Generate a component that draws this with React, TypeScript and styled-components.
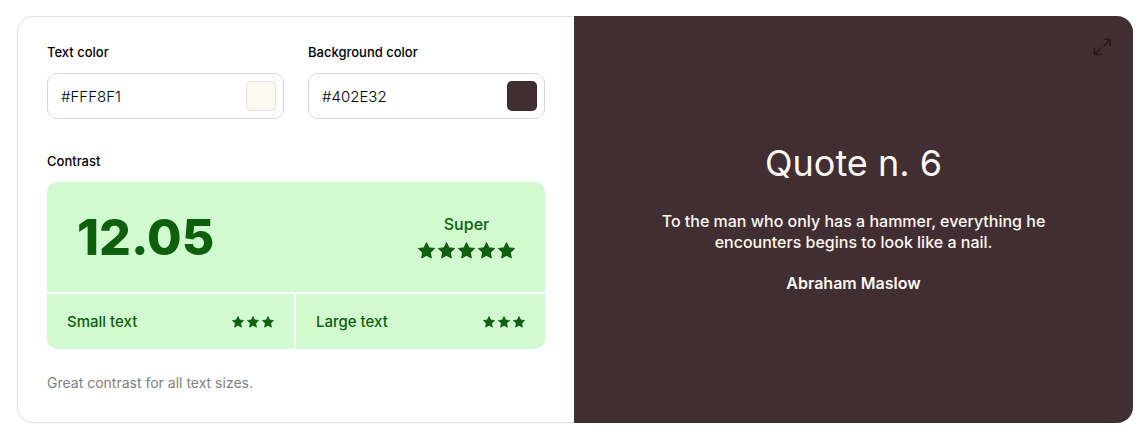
import React, { useState } from "react";
import styled, { createGlobalStyle } from "styled-components";

const GlobalStyle = createGlobalStyle`
  *, *::before, *::after { box-sizing: border-box; }
  body {
    margin: 0;
    background: #fff;
    color: #000;
    font-family: Inter, "Liberation Sans", sans-serif;
    font-size: 16px;
  }
`;

const Card = styled.main`
  display: grid;
  grid-template-columns: minmax(0, 557fr) minmax(0, 559fr);
  margin: 16px 14px 16px 17px;
`;

const Controls = styled.section`
  padding: 25px 29px 29px;
  border: 1px solid #e0e0e0;
  border-right: 0;
  border-radius: 16px 0 0 16px;
`;

const Fields = styled.div`
  display: grid;
  grid-template-columns: repeat(2, minmax(0, 1fr));
  gap: 24px;
  margin-bottom: 32px;
`;

const Label = styled.label`
  display: block;
  margin-bottom: 11px;
  font-size: 13px;
  font-weight: 500;
  line-height: 20px;
`;

const Heading = styled.h2`
  margin: 0 0 11px;
  font-size: 13px;
  font-weight: 500;
  line-height: 20px;
`;

const FieldBox = styled.div`
  display: flex;
  align-items: center;
  height: 46px;
  padding: 0 7px 0 13px;
  border: 1px solid #d4d4d8;
  border-radius: 10px;
`;

const HexInput = styled.input`
  flex: 1;
  min-width: 0;
  padding: 2px 0 0;
  border: 0;
  outline: 0;
  background: transparent;
  color: #000;
  font-family: inherit;
  font-size: 15px;
  font-weight: 300;
  line-height: 20px;
`;

const Swatch = styled.button<{ $color: string }>`
  width: 30px;
  height: 30px;
  padding: 0;
  border: 1px solid rgba(0, 0, 0, 0.1);
  border-radius: 5px;
  background: ${(p) => p.$color};
  cursor: pointer;
`;

const Results = styled.div`
  display: grid;
  grid-template-columns: 247fr 249fr;
  gap: 2px;
  overflow: hidden;
  border-radius: 10px;
  color: #0e5f0b;
`;

const Score = styled.div`
  display: flex;
  grid-column: 1 / -1;
  align-items: center;
  justify-content: space-between;
  height: 110px;
  padding: 0 30px;
  background: #d1fad0;
`;

const Ratio = styled.strong`
  font-size: 50px;
  font-weight: 800;
  line-height: 60px;
`;

const Verdict = styled.div`
  display: flex;
  flex-direction: column;
  align-items: center;
  gap: 8px;
  padding-bottom: 1px;
  font-weight: 500;
  line-height: 20px;
`;

const SizeResult = styled.div`
  display: flex;
  align-items: center;
  justify-content: space-between;
  height: 55px;
  padding: 0 20px;
  background: #d1fad0;
  font-size: 15px;
  font-weight: 500;
  line-height: 20px;
`;

const StarRow = styled.span<{ $gap: number }>`
  display: flex;
  gap: ${(p) => p.$gap}px;
`;

const Note = styled.p`
  margin: 24px 0 0;
  color: #808080;
  font-size: 14px;
  line-height: 20px;
`;

const Preview = styled.section`
  position: relative;
  display: flex;
  flex-direction: column;
  align-items: center;
  justify-content: center;
  padding: 24px 24px 29px;
  border-radius: 0 16px 16px 0;
  background: #402e32;
  color: #fff8f1;
  text-align: center;
`;

const ExpandButton = styled.button`
  position: absolute;
  top: 22px;
  right: 21px;
  display: flex;
  padding: 0;
  border: 0;
  background: none;
  color: #241a1c;
  cursor: pointer;
`;

const QuoteTitle = styled.h1`
  margin: 0 0 26px;
  font-size: 36px;
  font-weight: 400;
  line-height: 44px;
`;

const QuoteText = styled.p`
  max-width: 400px;
  margin: 0 0 20px;
  font-weight: 500;
  line-height: 21px;
`;

const Author = styled.p`
  margin: 0;
  font-weight: 600;
  line-height: 21px;
`;

function Stars({ count, size, gap }: { count: number; size: number; gap: number }) {
  return (
    <StarRow $gap={gap} role="img" aria-label={`${count} stars`}>
      {Array.from({ length: count }, (_, i) => (
        <svg
          key={i}
          width={size}
          height={size}
          viewBox="0 0 16 16"
          fill="currentColor"
          stroke="currentColor"
          strokeWidth="1"
          strokeLinejoin="round"
        >
          <path d="M8 .7l2.2 4.7 5.2.7-3.8 3.6.9 5.2L8 12.4l-4.5 2.5.9-5.2L.6 6.1l5.2-.7z" />
        </svg>
      ))}
    </StarRow>
  );
}

function ColorField({ id, label, initial }: { id: string; label: string; initial: string }) {
  const [value, setValue] = useState(initial);
  return (
    <div>
      <Label htmlFor={id}>{label}</Label>
      <FieldBox>
        <HexInput id={id} type="text" value={value} onChange={(e) => setValue(e.target.value)} />
        <Swatch type="button" $color={value} aria-label={`Pick ${label.toLowerCase()}`} />
      </FieldBox>
    </div>
  );
}

export default function App() {
  return (
    <>
      <GlobalStyle />
      <Card>
        <Controls>
          <Fields>
            <ColorField id="text-color" label="Text color" initial="#FFF8F1" />
            <ColorField id="background-color" label="Background color" initial="#402E32" />
          </Fields>
          <Heading>Contrast</Heading>
          <Results>
            <Score>
              <Ratio>12.05</Ratio>
              <Verdict>
                <span>Super</span>
                <Stars count={5} size={17} gap={3} />
              </Verdict>
            </Score>
            <SizeResult>
              <span>Small text</span>
              <Stars count={3} size={12} gap={3} />
            </SizeResult>
            <SizeResult>
              <span>Large text</span>
              <Stars count={3} size={12} gap={3} />
            </SizeResult>
          </Results>
          <Note>Great contrast for all text sizes.</Note>
        </Controls>
        <Preview>
          <ExpandButton type="button" aria-label="Full screen">
            <svg width="19" height="18" viewBox="0 0 19 18" fill="none" stroke="currentColor" strokeWidth="1.5">
              <path d="M10.5 1.5h6.8v6.3M17.2 1.6l-6.6 6.6M1.5 10v6.4h6.8M1.6 16.3l6.6-6.6" />
            </svg>
          </ExpandButton>
          <QuoteTitle>Quote n. 6</QuoteTitle>
          <QuoteText>To the man who only has a hammer, everything he encounters begins to look like a nail.</QuoteText>
          <Author>Abraham Maslow</Author>
        </Preview>
      </Card>
    </>
  );
}
